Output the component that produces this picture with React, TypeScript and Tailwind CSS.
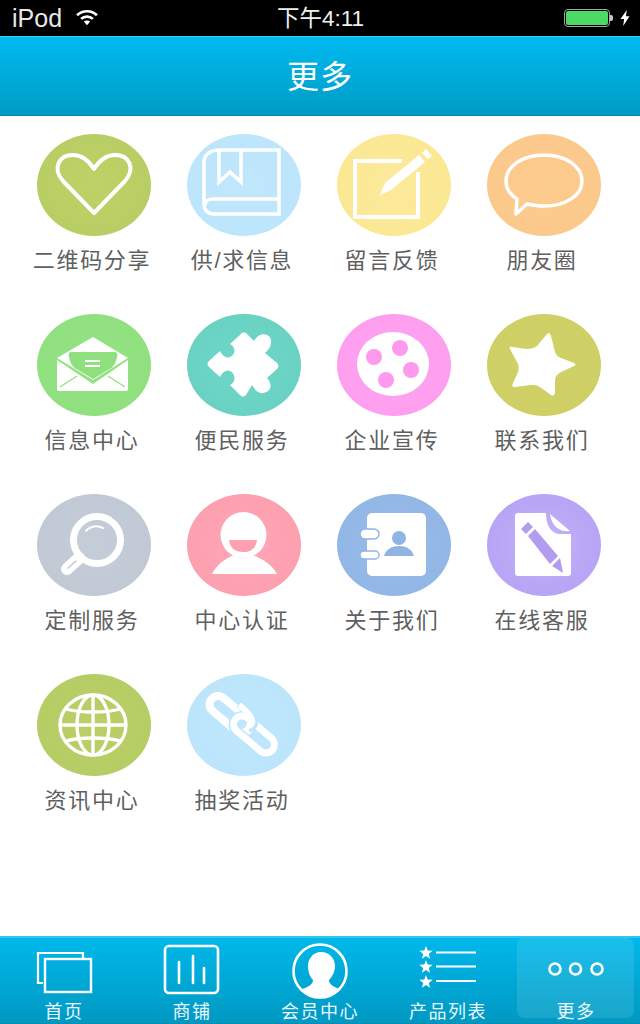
import React from "react";

const W = "#ffffff";

function Shape({ children }: { children: React.ReactNode }) {
  return (
    <svg width="114" height="102" viewBox="0 0 114 102" className="block">
      {children}
    </svg>
  );
}

const Heart = () => (
  <Shape>
    <path d="M57 79 L26 47 C15 34 22 21 36 21 C45 21 52 27 57 35 C62 27 69 21 78 21 C92 21 99 34 88 47 Z" fill="none" stroke={W} strokeWidth="4" strokeLinejoin="round" />
  </Shape>
);
const Book = () => (
  <Shape>
    <path d="M32 16 H92 V80 H27 C20 80 17 75 17 71 V28 C17 21 23 16 32 16 Z" fill="none" stroke={W} strokeWidth="3.5" />
    <path d="M18 72 C18 66 22 65 27 65 H91" fill="none" stroke={W} strokeWidth="3.5" />
    <path d="M32 17 V48 L43 38 L54 48 V17" fill="none" stroke={W} strokeWidth="3.5" />
  </Shape>
);
const Note = () => (
  <Shape>
    <path d="M65 27 H18 V83 H81 V38" fill="none" stroke={W} strokeWidth="4" />
    <path d="M43 61 L48 49 L82 21 L88 28 L54 56 Z" fill={W} />
    <path d="M85 19 L89 15 L95 22 L91 25 Z" fill={W} />
  </Shape>
);
const Bubble = () => (
  <Shape>
    <path d="M57 21 C78 21 95 32 95 47 C95 62 78 72 57 72 C51 72 45 71 40 70 L29 80 L30 65 C22 60 19 54 19 47 C19 32 36 21 57 21 Z" fill="none" stroke={W} strokeWidth="3.5" strokeLinejoin="round" />
  </Shape>
);
const Mail = () => (
  <Shape>
    <path d="M20 44 L56 23 L91 44 L56 66 Z" fill={W} />
    <path d="M35 38 H77 C80 38 81 40 80 43 C79 49 76 54 71 56 L56 65 L41 56 C36 54 33 49 32 43 C31 40 32 38 35 38 Z" fill="#8fdf7f" />
    <path d="M48 47 H63 M48 52 H63" stroke={W} strokeWidth="1.8" />
    <path d="M20 46 L56 70 L91 46 V75 C91 76 90 77 89 77 H22 C21 77 20 76 20 75 Z" fill={W} />
    <path d="M23 73 L40 62 M88 73 L71 62" stroke="#8fdf7f" strokeWidth="1.2" />
  </Shape>
);
const Puzzle = () => (
  <Shape>
    <path d="M53 21 C55 18 58 18 60 20 L67 27 C70 22 75 19 80 21 C86 23 85 33 80 37 L78 39 L90 49 C92 51 92 53 90 55 L80 64 C84 68 85 74 81 77 C76 81 70 79 67 74 L65 71 L59 81 C57 83 55 83 53 81 L43 71 C49 68 49 60 43 57 C39 55 35 59 33 63 L22 53 C20 51 20 49 22 47 L33 37 C35 41 39 45 43 43 C49 40 49 33 43 30 Z" fill={W} />
  </Shape>
);
const Film = () => (
  <Shape>
    <ellipse cx="56" cy="50" rx="36" ry="32" fill={W} />
    <circle cx="63" cy="34" r="8" fill="#fd9aee" />
    <circle cx="37" cy="43" r="8" fill="#fd9aee" />
    <circle cx="74" cy="56" r="8" fill="#fd9aee" />
    <circle cx="49" cy="66" r="8" fill="#fd9aee" />
  </Shape>
);
const Star = () => (
  <Shape>
    <path d="M60 20 C62 18 63 19 64 22 L68 38 C69 41 71 43 74 44 L87 49 C89 50 89 51 87 52 L74 58 C70 60 68 63 68 66 L68 79 C67 82 66 82 64 81 L53 73 C50 71 47 71 44 71 L28 73 C25 73 25 71 26 69 L31 58 C32 54 32 51 30 48 L23 35 C22 33 23 32 25 33 L40 35 C44 35 47 34 50 32 Z" fill={W} />
  </Shape>
);
const Search = () => (
  <Shape>
    <circle cx="60" cy="46" r="23.5" fill="none" stroke={W} strokeWidth="7" />
    <path d="M42 64 L30 75" stroke={W} strokeWidth="12" strokeLinecap="round" />
    <path d="M31 74 L39 67" stroke="#c0c9d4" strokeWidth="1.5" strokeLinecap="round" />
    <path d="M49 37 C53 32 60 31 66 34" fill="none" stroke={W} strokeWidth="2" strokeLinecap="round" />
  </Shape>
);
const Person = () => (
  <Shape>
    <circle cx="56.5" cy="41" r="23" fill={W} />
    <path d="M42 46 H70 C69 54 64 58 56 58 C48 58 43 54 42 46 Z" fill="#fda0b0" />
    <path d="M25 80 C30 70 38 65 47 61 C53 65 60 65 66 61 C75 65 85 70 90 80 Z" fill={W} />
  </Shape>
);
const Contacts = () => (
  <Shape>
    <rect x="30" y="19" width="59" height="63" rx="5" fill={W} />
    <rect x="23" y="35" width="19" height="10" rx="5" fill={W} stroke="#90b5e4" strokeWidth="1.5" />
    <rect x="23" y="57" width="19" height="8" rx="4" fill={W} stroke="#90b5e4" strokeWidth="1.5" />
    <circle cx="62" cy="44" r="7" fill="#90b5e4" />
    <path d="M47 62 C49 55 55 52 62 52 C69 52 75 55 77 62 Z" fill="#90b5e4" />
  </Shape>
);
const Doc = () => (
  <Shape>
    <path d="M31 19 H59 C59 30 63 39 72 40 H84 V79 C84 81 83 82 81 82 H31 C29 82 28 81 28 79 V22 C28 20 29 19 31 19 Z" fill={W} />
    <path d="M63 20 L83 37 C74 38 65 34 63 20 Z" fill={W} />
    <path d="M34 35 L41 28 L46 33 L39 40 Z" fill="#b19cf0" />
    <path d="M41 42 L48 35 L71 62 L63 70 Z" fill="#b19cf0" />
    <path d="M65 72 L73 64 L76 79 Z" fill="#b19cf0" />
  </Shape>
);
const Globe = () => (
  <Shape>
    <g fill="none" stroke={W} strokeWidth="3.4">
      <ellipse cx="56" cy="51" rx="33" ry="30" />
      <ellipse cx="56" cy="51" rx="16" ry="30" />
      <path d="M56 21 V81" />
      <path d="M23 51 H89" />
      <path d="M29 35 C42 39 70 39 83 35" />
      <path d="M29 67 C42 63 70 63 83 67" />
    </g>
  </Shape>
);
const Chain = () => (
  <Shape>
    <g fill="none">
      <rect x="19" y="32" width="48" height="17" rx="8.5" stroke={W} strokeWidth="8" transform="rotate(40 43 40.5)" />
      <rect x="43" y="52" width="48" height="17" rx="8.5" stroke="#bce5fc" strokeWidth="10" transform="rotate(40 67 60.5)" />
      <rect x="43" y="52" width="48" height="17" rx="8.5" stroke={W} strokeWidth="7" transform="rotate(40 67 60.5)" />
      <path d="M52 30 C60 36 66 42 67 46 C68 50 66 54 62 54" stroke="#bce5fc" strokeWidth="8" />
      <path d="M52 31 C60 37 64 41 65 46 C66 50 64 52 60 52" stroke={W} strokeWidth="6" />
    </g>
  </Shape>
);

const items = [
  { label: "二维码分享", Icon: Heart, bg: "bg-[radial-gradient(ellipse_at_center,#bdd266_0%,#b8ce64_70%,#a9c160_100%)]" },
  { label: "供/求信息", Icon: Book, bg: "bg-[radial-gradient(ellipse_at_center,#c0e7fc_0%,#bde5fb_70%,#a8dcf8_100%)]" },
  { label: "留言反馈", Icon: Note, bg: "bg-[radial-gradient(ellipse_at_center,#fcea9c_0%,#fbe893_70%,#f6dd85_100%)]" },
  { label: "朋友圈", Icon: Bubble, bg: "bg-[radial-gradient(ellipse_at_center,#fccb8e_0%,#fbc98b_70%,#f5bd86_100%)]" },
  { label: "信息中心", Icon: Mail, bg: "bg-[radial-gradient(ellipse_at_center,#95e484_0%,#90e080_70%,#83d677_100%)]" },
  { label: "便民服务", Icon: Puzzle, bg: "bg-[radial-gradient(ellipse_at_center,#70d7c7_0%,#6ad2c3_70%,#5bc3b8_100%)]" },
  { label: "企业宣传", Icon: Film, bg: "bg-[radial-gradient(ellipse_at_center,#ffa4f2_0%,#fe9eef_70%,#f68be4_100%)]" },
  { label: "联系我们", Icon: Star, bg: "bg-[radial-gradient(ellipse_at_center,#d0d166_0%,#cecf64_70%,#c5c55e_100%)]" },
  { label: "定制服务", Icon: Search, bg: "bg-[radial-gradient(ellipse_at_center,#c5cdd8_0%,#c0c9d4_70%,#b3bdc9_100%)]" },
  { label: "中心认证", Icon: Person, bg: "bg-[radial-gradient(ellipse_at_center,#ffa6b6_0%,#fda0b0_70%,#f996a7_100%)]" },
  { label: "关于我们", Icon: Contacts, bg: "bg-[radial-gradient(ellipse_at_center,#99bcea_0%,#92b6e5_70%,#83aadb_100%)]" },
  { label: "在线客服", Icon: Doc, bg: "bg-[radial-gradient(ellipse_at_center,#c3b3fa_0%,#b7a4f5_70%,#a68ee7_100%)]" },
  { label: "资讯中心", Icon: Globe, bg: "bg-[radial-gradient(ellipse_at_center,#b9cf67_0%,#b6cc64_70%,#a8bf5f_100%)]" },
  { label: "抽奖活动", Icon: Chain, bg: "bg-[radial-gradient(ellipse_at_center,#bfe7fd_0%,#bce5fc_70%,#aadffa_100%)]" },
];

const TabSvg = ({ children }: { children: React.ReactNode }) => (
  <svg width="128" height="60" viewBox="0 0 128 60" className="block">
    {children}
  </svg>
);

const starPath = (cx: number, cy: number, r: number) => {
  const pts: string[] = [];
  for (let i = 0; i < 10; i++) {
    const rad = i % 2 === 0 ? r : r * 0.42;
    const a = -Math.PI / 2 + (i * Math.PI) / 5;
    pts.push(`${(cx + rad * Math.cos(a)).toFixed(1)},${(cy + rad * Math.sin(a)).toFixed(1)}`);
  }
  return `M${pts.join(" L")} Z`;
};

const tabs = [
  {
    label: "首页",
    icon: (
      <TabSvg>
        <path d="M43 41 H38 V11 H83 V16" fill="none" stroke={W} strokeWidth="2.2" />
        <rect x="45" y="17" width="46" height="33" fill="none" stroke={W} strokeWidth="2.4" />
      </TabSvg>
    ),
  },
  {
    label: "商铺",
    icon: (
      <TabSvg>
        <rect x="37" y="4" width="53" height="47" rx="4" fill="none" stroke={W} strokeWidth="2.6" />
        <path d="M51 20 V41 M65 14 V41 M76 26 V41" stroke={W} strokeWidth="2.6" strokeLinecap="round" />
      </TabSvg>
    ),
  },
  {
    label: "会员中心",
    icon: (
      <TabSvg>
        <circle cx="64" cy="29" r="26.5" fill="none" stroke={W} strokeWidth="2.6" />
        <path d="M65 10 C74 10 79 17 79 24 C79 30 76 35 73 38 C73 42 77 45 84 47 C80 52 72 55 64 55 C56 55 50 52 46 47 C53 45 57 42 57 38 C54 35 52 30 52 24 C52 17 57 10 65 10 Z" fill={W} />
      </TabSvg>
    ),
  },
  {
    label: "产品列表",
    icon: (
      <TabSvg>
        <path d={starPath(42, 11, 7)} fill={W} />
        <path d={starPath(42, 25, 7)} fill={W} />
        <path d={starPath(42, 40, 7)} fill={W} />
        <path d="M52 10.5 H92 M52 24.5 H92 M52 39 H92" stroke={W} strokeWidth="2.2" />
      </TabSvg>
    ),
  },
  {
    label: "更多",
    icon: (
      <TabSvg>
        <circle cx="43" cy="27" r="5.5" fill="none" stroke={W} strokeWidth="2.6" />
        <circle cx="63.5" cy="27" r="5.5" fill="none" stroke={W} strokeWidth="2.6" />
        <circle cx="85" cy="27" r="5.5" fill="none" stroke={W} strokeWidth="2.6" />
      </TabSvg>
    ),
    active: true,
  },
];

const cjk = "font-['Liberation_Sans','Noto_Sans_CJK_SC',sans-serif]";

export default function App() {
  return (
    <div className={`w-[640px] h-[1024px] flex flex-col bg-white overflow-hidden ${cjk}`}>
      <div className="relative h-9 shrink-0 bg-black text-white flex items-center justify-between pl-3 pr-[9px]">
        <div className="flex items-center gap-[13px]">
          <span className="text-[25px] leading-none text-[#e8e8e8]">iPod</span>
          <svg width="24" height="18" viewBox="0 0 26 20">
            <path d="M2 7 C8 1 18 1 24 7" fill="none" stroke={W} strokeWidth="3" />
            <path d="M6.5 11 C10 7.5 16 7.5 19.5 11" fill="none" stroke={W} strokeWidth="3" />
            <path d="M13 18 L9.5 14 C11.5 12.5 14.5 12.5 16.5 14 Z" fill={W} />
          </svg>
        </div>
        <span className="absolute left-[277px] top-[6px] text-[22.5px] leading-[26px] text-[#f0f0f0]">下午4:11</span>
        <div className="flex items-center">
          <div className="w-[46px] h-[18px] rounded-[4px] border border-[#a5a5a5] p-px">
            <div className="w-full h-full rounded-[2px] bg-[#4cd964]" />
          </div>
          <div className="w-[3px] h-[6px] bg-[#c8c8c8] rounded-r-[2px]" />
          <svg width="12" height="18" viewBox="0 0 12 20" className="ml-[6px]">
            <path d="M8 1 L1 11 H5 L4 19 L11 8 H7 Z" fill={W} />
          </svg>
        </div>
      </div>

      <div className="h-20 shrink-0 pt-px flex items-center justify-center border-t border-t-[#3ccdf7] border-b border-b-[#0b84a6] bg-gradient-to-b from-[#00baf0] to-[#009cc5] text-white text-[32px] tracking-[1px] leading-none">
        更多
      </div>

      <div className="flex-1 pl-[19px] pr-[21px] pt-[18px]">
        <div className="grid grid-cols-4 auto-rows-[180px]">
          {items.map(({ label, Icon, bg }) => (
            <div key={label} className="flex flex-col items-center">
              <div className={`w-[114px] h-[102px] rounded-[50%] ${bg}`}>
                <Icon />
              </div>
              <div className="mt-3 mr-[4px] text-[22px] leading-[26px] tracking-[1.7px] text-[#5f5f5f] whitespace-nowrap">
                {label}
              </div>
            </div>
          ))}
        </div>
      </div>

      <div className="h-[88px] shrink-0 grid grid-cols-5 border-t-2 border-t-[#35c4ee] border-b border-b-[#0a8cb2] bg-gradient-to-b from-[#00b8ea] to-[#0099c2] text-white">
        {tabs.map((t) => (
          <div key={t.label} className="relative flex flex-col items-center pt-1">
            {t.active && <div className="absolute left-[5px] top-0 w-[117px] h-[80px] rounded-[7px] bg-white/10" />}
            <div className="relative">{t.icon}</div>
            <div className="relative text-[18px] leading-5 tracking-[1.5px] text-[#eaf8fd] whitespace-nowrap">{t.label}</div>
          </div>
        ))}
      </div>
    </div>
  );
}
